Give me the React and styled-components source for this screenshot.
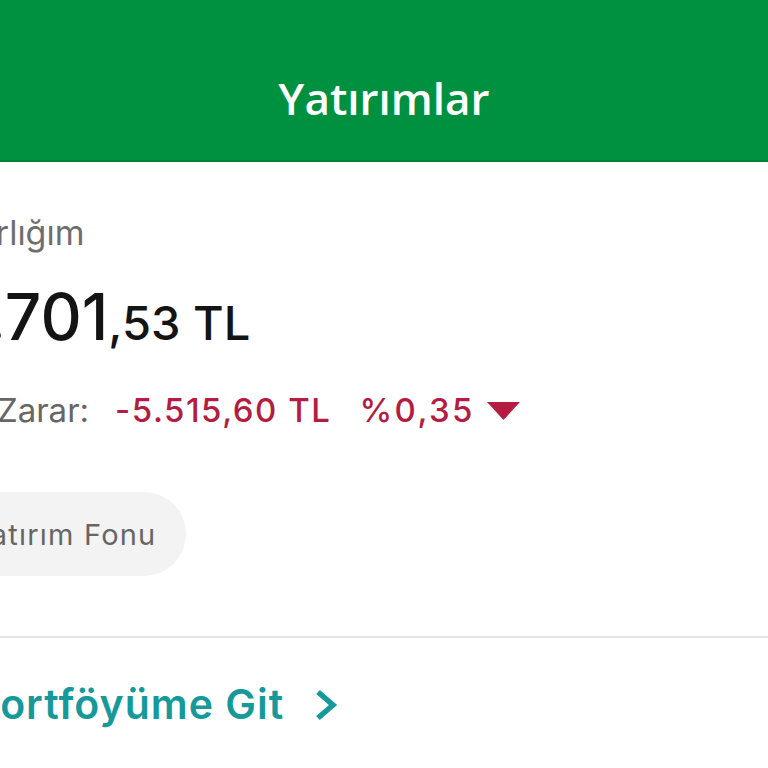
import React from 'react';
import styled, { createGlobalStyle } from 'styled-components';

const GlobalStyle = createGlobalStyle`
	html, body {
		margin: 0;
		padding: 0;
		background: #ffffff;
		overflow: hidden;
	}
	body {
		font-family: Inter, "Open Sans", sans-serif;
	}
`;

const Page = styled.div`
	width: 768px;
	height: 768px;
	overflow: hidden;
	display: flex;
	flex-direction: column;
	background: #ffffff;
`;

const Header = styled.header`
	height: 162px;
	flex-shrink: 0;
	box-sizing: border-box;
	padding-top: 76px;
	background: #009140;
	border-bottom: 2px solid #007f37;
	display: flex;
	justify-content: center;
`;

const Title = styled.h1`
	margin: 0;
	font-family: "Open Sans", sans-serif;
	font-weight: 600;
	font-size: 44px;
	line-height: 1;
	color: #ffffff;
`;

const Body = styled.main`
	display: flex;
	flex-direction: column;
`;

const Label = styled.div`
	margin: 54px 0 0 -45px;
	font-size: 34px;
	line-height: 1;
	color: #6e6e6e;
	white-space: nowrap;
`;

const Total = styled.div`
	margin: 35px 0 0 -40px;
	display: flex;
	align-items: baseline;
	color: #141414;
	font-weight: 500;
	line-height: 1;
	white-space: nowrap;
`;

const Whole = styled.span`
	font-size: 64px;
`;

const Fraction = styled.span`
	font-size: 47px;
`;

const ProfitRow = styled.div`
	margin: 45px 0 0 -67px;
	display: flex;
	align-items: baseline;
	font-size: 33px;
	line-height: 1;
	white-space: nowrap;
`;

const ProfitLabel = styled.span`
	color: #666666;
	margin-right: 26px;
`;

const Amount = styled.span`
	color: #b51c41;
	font-weight: 500;
	letter-spacing: ${(p) => (p.$strong ? 1.5 : 2.4)}px;
	margin-right: ${(p) => p.$gap || 0}px;
`;

const Arrow = styled.svg`
	margin-left: 12px;
	align-self: center;
`;

const Chips = styled.div`
	margin: 65px 0 0 -58px;
	display: flex;
`;

const Chip = styled.div`
	height: 84px;
	box-sizing: border-box;
	padding: 0 30px 0 30px;
	border-radius: 42px;
	background: #f3f3f3;
	display: flex;
	align-items: center;
	font-size: 29px;
	letter-spacing: 1.2px;
	color: #666666;
	white-space: nowrap;
`;

const Divider = styled.hr`
	margin: 60px 0 0;
	border: 0;
	height: 2px;
	width: 100%;
	background: #e6e6e6;
`;

const PortfolioLink = styled.a`
	margin: 46px 0 0 -27px;
	display: flex;
	align-items: center;
	gap: 30px;
	font-size: 41px;
	font-weight: 600;
	letter-spacing: 1px;
	line-height: 1;
	color: #16999a;
	text-decoration: none;
	white-space: nowrap;
`;

const App = () => {
	return (
		<>
			<GlobalStyle />
			<Page>
				<Header>
					<Title>Yatırımlar</Title>
				</Header>
				<Body>
					<Label>Varlığım</Label>
					<Total>
						<Whole>1.701</Whole>
						<Fraction>,53 TL</Fraction>
					</Total>
					<ProfitRow>
						<ProfitLabel>Kâr/Zarar:</ProfitLabel>
						<Amount $strong $gap={28}>-5.515,60 TL</Amount>
						<Amount>%0,35</Amount>
						<Arrow width="33" height="18" viewBox="0 0 33 18">
							<polygon points="0,0 33,0 16.5,18" fill="#b51c41" />
						</Arrow>
					</ProfitRow>
					<Chips>
						<Chip>Yatırım Fonu</Chip>
					</Chips>
					<Divider />
					<PortfolioLink href="#">
						Portföyüme Git
						<svg width="24" height="32" viewBox="0 0 24 32">
							<polyline
								points="4,3 19,16 4,29"
								fill="none"
								stroke="#16999a"
								strokeWidth="5.5"
							/>
						</svg>
					</PortfolioLink>
				</Body>
			</Page>
		</>
	);
};

export default App;
